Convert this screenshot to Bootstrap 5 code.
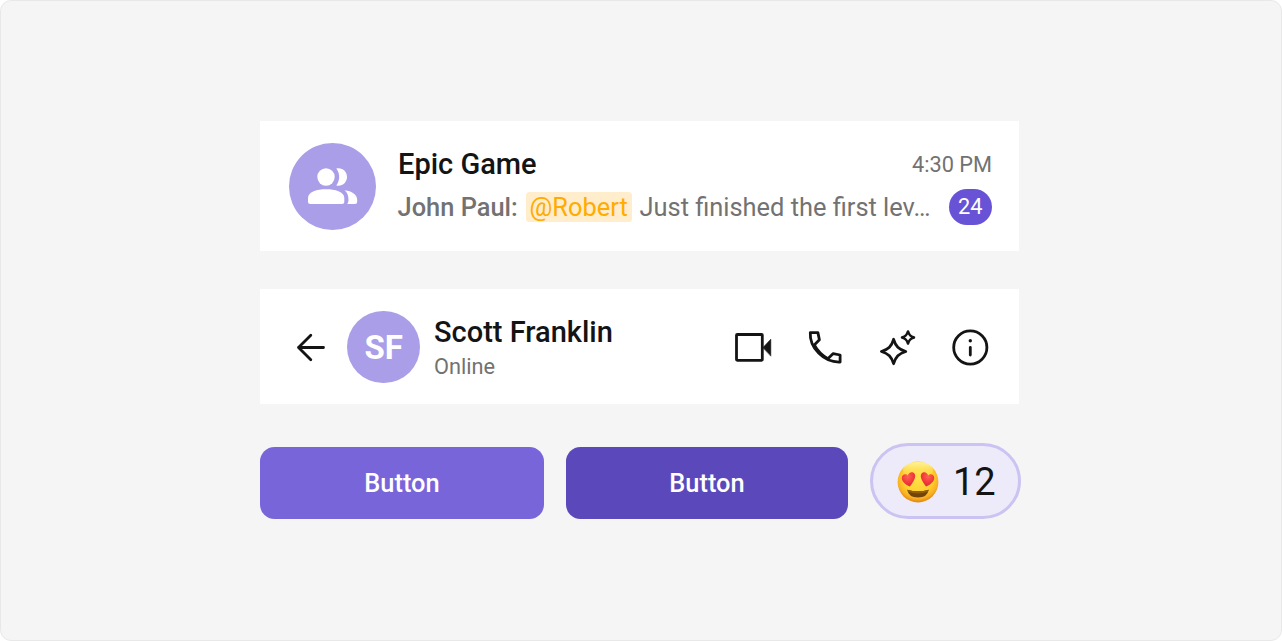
<!DOCTYPE html>
<html lang="en">
<head>
<meta charset="utf-8">
<meta name="viewport" content="width=device-width, initial-scale=1">
<title>Chat components</title>
<link href="https://cdn.jsdelivr.net/npm/bootstrap@5.3.0/dist/css/bootstrap.min.css" rel="stylesheet">
<style>
  body { font-family: Roboto, "Liberation Sans", sans-serif; background: #fff; color: #141414; overflow: hidden; }
  .stage { width: 1282px; height: 641px; background: #f5f5f5; border: 1px solid #e8e8e8; border-radius: 11px; padding: 120px 0 0 259px; }
  .panel { width: 759px; background: #fff; }
  .chat-row { height: 130px; padding: 0 27px 0 29px; gap: 22px; }
  .chat-head { height: 114.5px; margin-top: 38.4px; padding: 1.2px 28.7px 0 36px; }
  .avatar { background: #aa9ee8; color: #fff; border-radius: 50%; }
  .avatar-lg { width: 87px; height: 87px; }
  .avatar-md { width: 72.5px; height: 72.5px; font-size: 33px; font-weight: 700; margin-left: 22px; padding: 1px 0 0 1px; }
  .line { height: 43.2px; line-height: 43.2px; white-space: pre; }
  .name { font-size: 29px; font-weight: 500; }
  .muted { color: #727272; }
  .time { font-size: 21.75px; }
  .preview { font-size: 25.4px; margin-left: -.4px; }
  .sender { font-weight: 500; }
  .mention { background: #ffedcc; color: #ffab00; border-radius: 3.6px; line-height: 30px; padding: 0 3.8px; margin: -1.4px 8px 0 8px; }
  .count { background: #6852d6; color: #fff; width: 43.5px; height: 36px; line-height: 36px; margin-top: -1.4px; border-radius: 18px; font-size: 21.75px; }
  .head-text { margin-left: 14.5px; padding-top: 5.2px; }
  .head-text .name { line-height: 35.8px; }
  .head-text .time { line-height: 34.8px; }
  .actions { gap: 32.5px; }
  .actions svg, .back { width: 40px; height: 40px; fill: none; stroke: #141414; stroke-width: 2.8; stroke-linejoin: round; stroke-linecap: round; }
  .back { width: 29px; }
  .controls { margin-top: 39.3px; }
  .btn-fill { height: 72.3px; margin-top: 3.5px; border: 0; border-radius: 14.5px; padding: 0; font-size: 25.4px; font-weight: 500; color: #fff; }
  .btn-a, .btn-a:hover { width: 284px; background: #7965da; color: #fff; }
  .btn-b, .btn-b:hover { width: 282px; margin-left: 22px; background: #5b48bb; color: #fff; }
  .reaction { width: 151px; height: 75.6px; margin-left: 22px; border: 3.6px solid #ccc3f2; border-radius: 38px; background: #edeafa; padding: 1.4px 0 0 22.6px; font-size: 38px; line-height: 1; }
  .tally { margin-left: 13.4px; }
</style>
</head>
<body>
<main class="stage">
  <section class="panel chat-row d-flex align-items-center">
    <div class="avatar avatar-lg flex-shrink-0">
      <svg width="87" height="87" viewBox="289 143 87 87" fill="#fff" class="d-block">
        <circle cx="326" cy="177" r="8.7"/>
        <path d="M336.3 168.6C342.4 167.2 347 171.7 347 177C347 182.4 342.3 186.8 336.3 185.5C340.2 180.5 340.2 173.5 336.3 168.6Z"/>
        <path d="M308 198C308 191.500 317 189.200 326 189.200C335 189.200 344.300 191.500 344.300 198V201.500Q344.300 204 341.800 204H310.500Q308 204 308 201.500Z"/>
        <path d="M344.500 190.200C352 191 357.200 194.500 357.200 200V201.500Q357.200 204 354.700 204H347.300Q348.500 202.500 348.500 200C348.500 195.500 347.300 192.500 344.500 190.200Z"/>
      </svg>
    </div>
    <div class="flex-grow-1">
      <div class="line d-flex justify-content-between">
        <span class="name">Epic Game</span><span class="time muted">4:30 PM</span>
      </div>
      <div class="line d-flex align-items-center">
        <span class="preview muted d-flex align-items-center"><span class="sender">John Paul:</span><span class="mention">@Robert</span><span>Just finished the first lev…</span></span>
        <span class="count ms-auto text-center">24</span>
      </div>
    </div>
  </section>

  <section class="panel chat-head d-flex align-items-center">
    <svg class="back" viewBox="296 327 29 40"><path d="M323.500 347.500H298.500M310.800 335.200L298.500 347.500L310.800 359.800"/></svg>
    <div class="avatar avatar-md d-flex align-items-center justify-content-center">SF</div>
    <div class="head-text">
      <div class="name">Scott Franklin</div>
      <div class="time muted">Online</div>
    </div>
    <div class="actions d-flex ms-auto">
      <svg viewBox="733 327 40 40"><rect x="736.500" y="334.500" width="25.800" height="25.800" rx=".7"/><path d="M763 347.500L770.800 339.200V355.800Z" fill="#141414" stroke-width=".6"/></svg>
      <svg viewBox="805.300 327 40 40"><path d="M810.600 332.600H818.200L819.700 339.800L814.600 344.900C818 351.200 822 355.200 828.200 358.700L833.500 353.600L840.400 355V362.100C824.500 362.700 809.600 348 810.600 332.600Z"/></svg>
      <svg viewBox="878 327 40 40"><path d="M893.600 339.300C895.800 346.500 898.600 349.300 905.800 351.500C898.600 353.700 895.800 356.500 893.600 363.700C891.400 356.500 888.600 353.700 881.400 351.500C888.600 349.300 891.400 346.500 893.600 339.300Z"/><path d="M908 331.500C909.200 335.200 910.300 336.300 914 337.500C910.300 338.700 909.200 339.800 908 343.500C906.800 339.800 905.700 338.700 902 337.500C905.700 336.300 906.800 335.200 908 331.500Z" stroke-width="2.500"/></svg>
      <svg viewBox="950 327 40 40"><circle cx="970.300" cy="347.500" r="16.600"/><path d="M970.300 347.500V355"/><circle cx="970.300" cy="340.700" r="1.700" fill="#141414" stroke="none"/></svg>
    </div>
  </section>

  <section class="controls d-flex align-items-start">
    <button class="btn btn-fill btn-a" type="button">Button</button>
    <button class="btn btn-fill btn-b" type="button">Button</button>
    <div class="reaction d-flex align-items-center">
      <svg width="44" height="44" viewBox="0 0 44 44">
        <defs>
          <radialGradient id="face" cx=".5" cy=".4" r=".6"><stop offset="0" stop-color="#ffe14a"/><stop offset=".6" stop-color="#ffd130"/><stop offset=".85" stop-color="#f9ae20"/><stop offset="1" stop-color="#df8410"/></radialGradient>
          <linearGradient id="shine" x2="0" y2="1"><stop offset="0" stop-color="#fff4a0"/><stop offset="1" stop-color="#ffe14a" stop-opacity="0"/></linearGradient>
          <radialGradient id="heart" cx=".45" cy=".3" r=".7"><stop offset="0" stop-color="#ff6156"/><stop offset=".6" stop-color="#f13a3c"/><stop offset="1" stop-color="#dc2c33"/></radialGradient>
        </defs>
        <circle cx="22" cy="22" r="20.400" fill="url(#face)"/>
        <ellipse cx="22" cy="10" rx="15" ry="8" fill="url(#shine)"/>
        <path d="M11.300 29.800Q22 32.800 32.700 29.800Q31.500 37.500 22 37.500Q12.500 37.500 11.300 29.800Z" fill="#70440a"/>
        <path d="M11.300 29.800Q22 32.800 32.700 29.800L32 31.800Q22 35 12 31.800Z" fill="#925d0c"/>
        <path id="eye" d="M13.900 26.600C9.500 24.500 5.700 21.500 5.800 17.700C5.900 14.400 9.600 13 11.800 15.600C12.500 12.200 16.500 11.100 18.400 13.600C20.900 17 17 22.500 13.900 26.600Z" fill="url(#heart)"/>
        <use href="#eye" transform="translate(44 0) scale(-1 1)"/>
      </svg>
      <span class="tally">12</span>
    </div>
  </section>
</main>
<script src="https://cdn.jsdelivr.net/npm/bootstrap@5.3.0/dist/js/bootstrap.bundle.min.js"></script>
</body>
</html>
